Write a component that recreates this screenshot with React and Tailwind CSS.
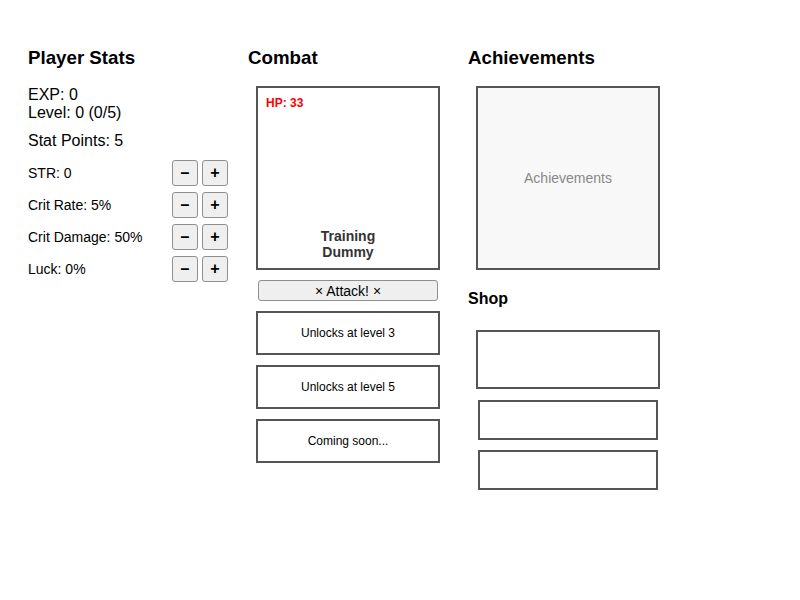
import React from 'react';

const stats = [
    { label: 'STR', value: '0' },
    { label: 'Crit Rate', value: '5%' },
    { label: 'Crit Damage', value: '50%' },
    { label: 'Luck', value: '0%' },
];

const StatButton = ({ children }) => (
    <button className="w-[26px] h-[26px] flex items-center justify-center bg-[#efefef] border border-[#8f8f8f] rounded-[3px] text-[16px] font-bold text-black leading-none">
        {children}
    </button>
);

const PlayerStats = () => (
    <div className="w-[200px] flex flex-col">
        <h2 className="text-[18.72px] font-bold leading-[23px] h-[23px] mt-[1px] mb-[17px]">Player Stats</h2>
        <div className="text-[16px] leading-[18px]">EXP: 0</div>
        <div className="text-[16px] leading-[18px]">Level: 0 (0/5)</div>
        <div className="text-[16px] leading-[18px] mt-[10px]">Stat Points: 5</div>
        <div className="flex flex-col gap-[6px] mt-[10px]">
            {stats.map((s) => (
                <div key={s.label} className="flex items-center justify-between h-[26px]">
                    <span className="text-[14px]">{s.label}: {s.value}</span>
                    <div className="flex gap-[4px]">
                        <StatButton>–</StatButton>
                        <StatButton>+</StatButton>
                    </div>
                </div>
            ))}
        </div>
    </div>
);

const Combat = () => (
    <div className="w-[200px] flex flex-col">
        <h2 className="text-[18.72px] font-bold leading-[23px] h-[23px] mt-[1px] mb-[17px]">Combat</h2>
        {/* Enemy Card */}
        <div className="mx-2 h-[184px] border-2 border-[#555] bg-white flex flex-col justify-between px-2 pt-[8px] pb-[8px]">
            <div className="text-[12px] font-bold text-[#ff0000] leading-[14px]">HP: 33</div>
            <div className="text-[14px] font-bold text-[#333] leading-[16px] text-center">
                Training<br />Dummy
            </div>
        </div>
        <button className="mx-[10px] mt-[10px] h-[21px] bg-[#efefef] border border-[#8f8f8f] rounded-[3px] text-[14px] text-black leading-none">
            × Attack! ×
        </button>
        <div className="flex flex-col gap-[10px] mt-[10px]">
            {['Unlocks at level 3', 'Unlocks at level 5', 'Coming soon...'].map((t) => (
                <div key={t} className="mx-2 h-[44px] border-2 border-[#555] flex items-center justify-center text-[12px]">
                    {t}
                </div>
            ))}
        </div>
    </div>
);

const Achievements = () => (
    <div className="w-[200px] flex flex-col">
        <h2 className="text-[18.72px] font-bold leading-[23px] h-[23px] mt-[1px] mb-[17px]">Achievements</h2>
        <div className="mx-2 h-[184px] border-2 border-[#555] bg-[#f8f8f8] flex items-center justify-center text-[14px] text-[#888]">
            Achievements
        </div>
        <h3 className="text-[16px] font-bold leading-[18px] mt-[20px]">Shop</h3>
        <div className="mx-2 mt-[22px] h-[59px] border-2 border-[#555]" />
        <div className="mx-[10px] mt-[11px] h-[40px] border-2 border-[#555]" />
        <div className="mx-[10px] mt-[10px] h-[40px] border-2 border-[#555]" />
    </div>
);

export default function App() {
    return (
        <div className="w-[800px] h-[600px] bg-white text-black font-['Liberation_Sans',Arial,sans-serif] pl-[28px] pt-[45px] flex gap-[20px] items-start">
            <PlayerStats />
            <Combat />
            <Achievements />
        </div>
    );
}
